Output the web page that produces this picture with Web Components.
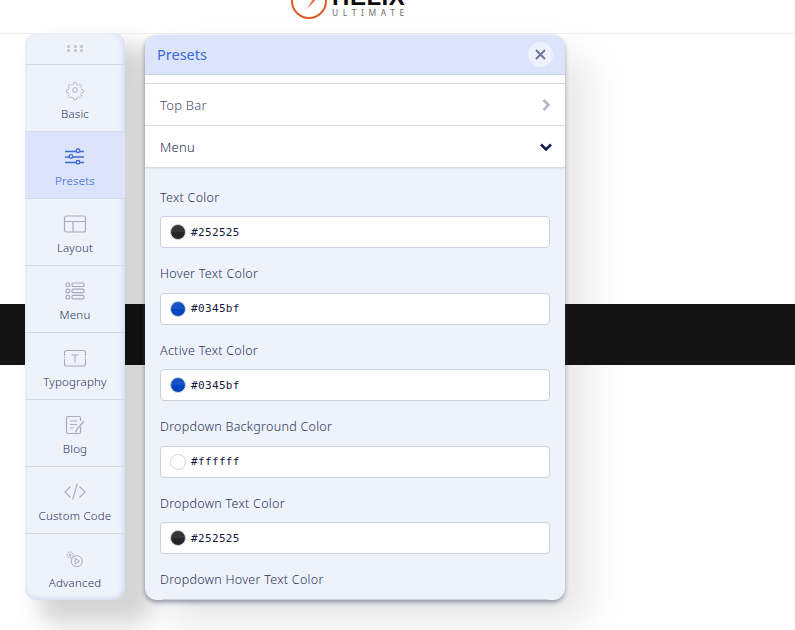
<!DOCTYPE html>
<html>
<head>
<meta charset="utf-8">
<title>Helix Ultimate</title>
<style>
  html, body { margin: 0; height: 630px; overflow: hidden; background: #fff; font-family: "Noto Sans", sans-serif; }
</style>
</head>
<body>
<helix-stage>
  <helix-header slot="header"></helix-header>
  <helix-sidebar slot="sidebar">
    <helix-nav-item label="Basic" icon="gear"></helix-nav-item>
    <helix-nav-item label="Presets" icon="sliders" active></helix-nav-item>
    <helix-nav-item label="Layout" icon="layout"></helix-nav-item>
    <helix-nav-item label="Menu" icon="menu"></helix-nav-item>
    <helix-nav-item label="Typography" icon="type"></helix-nav-item>
    <helix-nav-item label="Blog" icon="blog"></helix-nav-item>
    <helix-nav-item label="Custom Code" icon="code"></helix-nav-item>
    <helix-nav-item label="Advanced" icon="advanced"></helix-nav-item>
  </helix-sidebar>
  <helix-panel slot="panel" title="Presets">
    <helix-accordion label="Top Bar"></helix-accordion>
    <helix-accordion label="Menu" open></helix-accordion>
    <helix-color-field label="Text Color" value="#252525"></helix-color-field>
    <helix-color-field label="Hover Text Color" value="#0345bf"></helix-color-field>
    <helix-color-field label="Active Text Color" value="#0345bf"></helix-color-field>
    <helix-color-field label="Dropdown Background Color" value="#ffffff"></helix-color-field>
    <helix-color-field label="Dropdown Text Color" value="#252525"></helix-color-field>
    <helix-color-field label="Dropdown Hover Text Color" value="" clipped></helix-color-field>
  </helix-panel>
</helix-stage>

<script>
const icons = {
  gear: `<g fill="none" stroke="currentColor" stroke-width="1.100" transform="translate(12 12) scale(.78) translate(-12 -12)"><circle cx="12" cy="12" r="3"/><path d="M10.400 2.500h3.200l.6 2.700 2 .9 2.400-1.500 2.300 2.300-1.500 2.400.9 2 2.700.6v3.200l-2.700.6-.9 2 1.500 2.400-2.300 2.300-2.400-1.500-2 .9-.6 2.700h-3.200l-.6-2.700-2-.9-2.400 1.500-2.300-2.300 1.500-2.400-.9-2-2.700-.6v-3.200l2.700-.6.9-2-1.500-2.400 2.300-2.300 2.400 1.500 2-.9z" stroke-dasharray="3 .7"/></g>`,
  sliders: `<g fill="none" stroke="currentColor" stroke-width="1.300"><path d="M2 6.500h19M2 12h19M2 17.500h19"/><circle cx="15" cy="5.800" r="1.800" fill="#dbe4fa"/><circle cx="8" cy="11.500" r="1.800" fill="#dbe4fa"/><circle cx="15" cy="17.300" r="1.800" fill="#dbe4fa"/></g>`,
  layout: `<g fill="none" stroke="currentColor" stroke-width="1.200"><rect x="1.500" y="4" width="21" height="16" rx="2"/><path d="M1.500 9.500h21M10 9.500V20"/></g>`,
  menu: `<g fill="none" stroke="currentColor" stroke-width="1.200"><rect x="3" y="4" width="3.500" height="3.500" rx="1"/><rect x="3" y="10.200" width="3.500" height="3.500" rx="1"/><rect x="3" y="16.400" width="3.500" height="3.500" rx="1"/><rect x="9" y="4" width="12" height="3.500" rx="1"/><rect x="9" y="10.200" width="12" height="3.500" rx="1"/><rect x="9" y="16.400" width="12" height="3.500" rx="1"/></g>`,
  type: `<g fill="none" stroke="currentColor" stroke-width="1.100"><path d="M1.500 10V6.500q0-2 2-2h17q2 0 2 2V10M1.500 13v5q0 2 2 2h17q2 0 2-2v-5M1 11.500h1.500M21.500 11.500H23"/><path d="M8.500 9h7M12 9v7.500" stroke-width="1"/></g>`,
  blog: `<g fill="none" stroke="currentColor" stroke-width="1.200"><path d="M17.500 13.500V19q0 1.500-1.500 1.500H5q-1.500 0-1.500-1.500V5q0-1.500 1.500-1.500h11q1.500 0 1.500 1.500v3"/><path d="M7 8h7M7 11.500h7M7 15h3.500"/><path d="M12.500 19.500l1.500-3.500 7-8"/></g>`,
  code: `<g fill="none" stroke="currentColor" stroke-width="1.100"><path d="M7.500 6.500L2 12l5.500 5.500M16.500 6.500L22 12l-5.500 5.500M14.300 3.500l-4.600 16"/></g>`,
  advanced: `<g fill="none" stroke="currentColor" stroke-width="1"><circle cx="7.200" cy="8" r="3" stroke-dasharray="1.400 .4"/><circle cx="7.200" cy="8" r=".9"/><circle cx="13.800" cy="14.200" r="5.500" fill="#edf2fb"/><path d="M12.200 11.300v5.800l4.200-2.900z"/></g>`
};

class HelixStage extends HTMLElement {
  constructor() {
    super();
    this.attachShadow({ mode: "open" }).innerHTML = `
      <style>
        :host { display: block; position: relative; width: 795px; height: 630px; overflow: hidden; background: #fff; }
        .band { position: absolute; left: 0; right: 0; top: 304px; height: 61px; background: #141414; }
        .float { position: absolute; }
        .side { left: 25px; top: 33px; }
        .main { left: 145px; top: 35px; }
      </style>
      <slot name="header"></slot>
      <div class="band"></div>
      <div class="float side"><slot name="sidebar"></slot></div>
      <div class="float main"><slot name="panel"></slot></div>`;
  }
}

class HelixHeader extends HTMLElement {
  constructor() {
    super();
    this.attachShadow({ mode: "open" }).innerHTML = `
      <style>
        :host { display: flex; justify-content: center; align-items: flex-end; box-sizing: border-box; height: 34px; padding: 0 95px 14px 0; border-bottom: 1px solid #f1f1f1; overflow: hidden; }
        .logo { display: flex; align-items: flex-end; gap: 5px; }
        svg { display: block; }
        .words { display: flex; flex-direction: column; align-items: flex-start; margin-bottom: 2px; }
        .name { font: 700 24px/16px "Liberation Sans", sans-serif; color: #0b0b0b; letter-spacing: .5px; margin-bottom: 3px; }
        .sub { font: 400 8.500px/9px "Noto Sans", sans-serif; color: #6d6d6d; letter-spacing: 4.600px; }
      </style>
      <div class="logo">
        <svg width="36" height="36" viewBox="0 0 36 36" fill="none">
          <circle cx="18" cy="18" r="17" stroke="#dd5a26" stroke-width="2"/>
          <path d="M11 27c5-1 7-4 9-8s5-5 5-11c2 5 0 9-3 12s-6 6-11 7z" fill="#e67a50"/>
        </svg>
        <div class="words"><span class="name">HELIX</span><span class="sub">ULTIMATE</span></div>
      </div>`;
  }
}

class HelixSidebar extends HTMLElement {
  constructor() {
    super();
    this.attachShadow({ mode: "open" }).innerHTML = `
      <style>
        :host { display: block; width: 100px; height: 567px; background: #edf2fb; border-radius: 12px;
          box-shadow: inset -4px 0 5px -2px #d5dcee, inset 0 -3px 4px -1px #d5dcee, 20px 18px 22px 6px rgba(0,0,0,.17); overflow: hidden; }
        .grip { height: 32px; display: grid; grid-template-columns: repeat(3, 3px); grid-auto-rows: 3px; gap: 1.500px 3.500px; align-content: center; justify-content: center; border-bottom: 1px solid #d4d9e8; box-sizing: border-box; }
        .grip i { background: #c3c9da; border-radius: 1px; }
      </style>
      <div class="grip"><i></i><i></i><i></i><i></i><i></i><i></i></div>
      <slot></slot>`;
  }
}

class HelixNavItem extends HTMLElement {
  constructor() {
    super();
    const icon = icons[this.getAttribute("icon")] || "";
    this.attachShadow({ mode: "open" }).innerHTML = `
      <style>
        :host { display: flex; flex-direction: column; align-items: center; height: 67px; box-sizing: border-box; padding-top: 13px; border-bottom: 1px solid #d4d9e8; color: #2c3358; --ico: #a6abbe; }
        :host(:last-child) { border-bottom: 0; }
        :host([active]) { background: #dbe4fa; color: #2f5fd2; --ico: #3e6bd6; }
        svg { width: 24px; height: 24px; color: var(--ico); display: block; }
        span { font: 300 11.500px/16px "Noto Sans", sans-serif; margin-top: 4px; white-space: nowrap; letter-spacing: .2px; }
      </style>
      <svg viewBox="0 0 24 24">${icon}</svg>
      <span>${this.getAttribute("label")}</span>`;
  }
}

class HelixPanel extends HTMLElement {
  constructor() {
    super();
    this.attachShadow({ mode: "open" }).innerHTML = `
      <style>
        :host { display: flex; flex-direction: column; width: 420px; height: 565px; background: #edf2fb; border-radius: 12px; overflow: hidden;
          box-shadow: 0 3px 4px rgba(70,80,110,.45), 22px 22px 40px rgba(0,0,0,.1), -2px 0 4px rgba(0,0,0,.08); }
        header { display: flex; align-items: center; justify-content: space-between; height: 40px; flex: none; box-sizing: border-box; padding: 0 12px; background: #dbe4fa; border-bottom: 1px solid #c7d2ee; }
        h2 { margin: 0 0 2px; font: 400 14.500px/20px "Noto Sans", sans-serif; color: #3e6bd6; }
        .close { width: 25px; height: 25px; border-radius: 50%; background: #edf2fb; display: grid; place-items: center; }
        .spacer { height: 8px; flex: none; background: #fff; }
        .body { flex: 1; overflow: hidden; display: flex; flex-direction: column; }
      </style>
      <header>
        <h2>${this.getAttribute("title")}</h2>
        <div class="close"><svg width="13" height="13" viewBox="0 0 13 13"><path d="M2 2l9 9M11 2l-9 9" stroke="#7175a0" stroke-width="2" fill="none"/></svg></div>
      </header>
      <div class="spacer"></div>
      <div class="body"><slot></slot></div>`;
  }
}

class HelixAccordion extends HTMLElement {
  constructor() {
    super();
    const open = this.hasAttribute("open");
    const chev = open
      ? `<svg width="14" height="14" viewBox="0 0 14 14"><path d="M2 4.500L7 9.500l5-5" stroke="#0f1a52" stroke-width="2.600" fill="none"/></svg>`
      : `<svg width="14" height="14" viewBox="0 0 14 14"><path d="M4.500 2L9.500 7l-5 5" stroke="#b4b9cc" stroke-width="2.600" fill="none"/></svg>`;
    this.attachShadow({ mode: "open" }).innerHTML = `
      <style>
        :host { display: flex; align-items: center; justify-content: space-between; flex: none; height: 42px; box-sizing: border-box; padding: 0 12px 0 15px; background: #fff; border-top: 1px solid #d9dadd; font: 300 13px/18px "Noto Sans", sans-serif; color: #4b5070; letter-spacing: .25px; }
        :host([open]) { border-bottom: 1px solid #d9dadd; height: 43px; margin-bottom: 21px; box-shadow: 0 1px 1px rgba(0,0,0,.04); color: #252a4d; }
        svg { display: block; }
      </style>
      <span>${this.getAttribute("label")}</span>${chev}`;
  }
}

class HelixColorField extends HTMLElement {
  constructor() {
    super();
    const value = this.getAttribute("value");
    const clipped = this.hasAttribute("clipped");
    this.attachShadow({ mode: "open" }).innerHTML = `
      <style>
        :host { display: block; flex: none; padding: 0 15px; height: 76.500px; box-sizing: border-box; }
        label { display: block; font: 300 12.500px/18px "Noto Sans", sans-serif; color: #2c3358; letter-spacing: .28px; margin: -0.2px 0 9.200px; }
        .input { display: flex; align-items: center; gap: 5px; height: 32px; box-sizing: border-box; padding-left: 9px; background: #fff; border: 1px solid #c9d0e1; border-radius: 4px; }
        .swatch { width: 16px; height: 16px; border-radius: 50%; background: ${value}; box-sizing: border-box; border: 1px solid #d2d4dc; position: relative; overflow: hidden; }
        .swatch::before { content: ""; position: absolute; inset: 0 0 50% 0; background: rgba(255,255,255,.08); }
        code { font: 400 11px/16px "DejaVu Sans Mono", monospace; color: #14183e; letter-spacing: .35px; margin-top: 1px; }
      </style>
      <label>${this.getAttribute("label")}</label>
      <div class="input">${clipped ? "" : `<span class="swatch"></span><code>${value}</code>`}</div>`;
  }
}

customElements.define("helix-stage", HelixStage);
customElements.define("helix-header", HelixHeader);
customElements.define("helix-sidebar", HelixSidebar);
customElements.define("helix-nav-item", HelixNavItem);
customElements.define("helix-panel", HelixPanel);
customElements.define("helix-accordion", HelixAccordion);
customElements.define("helix-color-field", HelixColorField);
</script>
</body>
</html>
